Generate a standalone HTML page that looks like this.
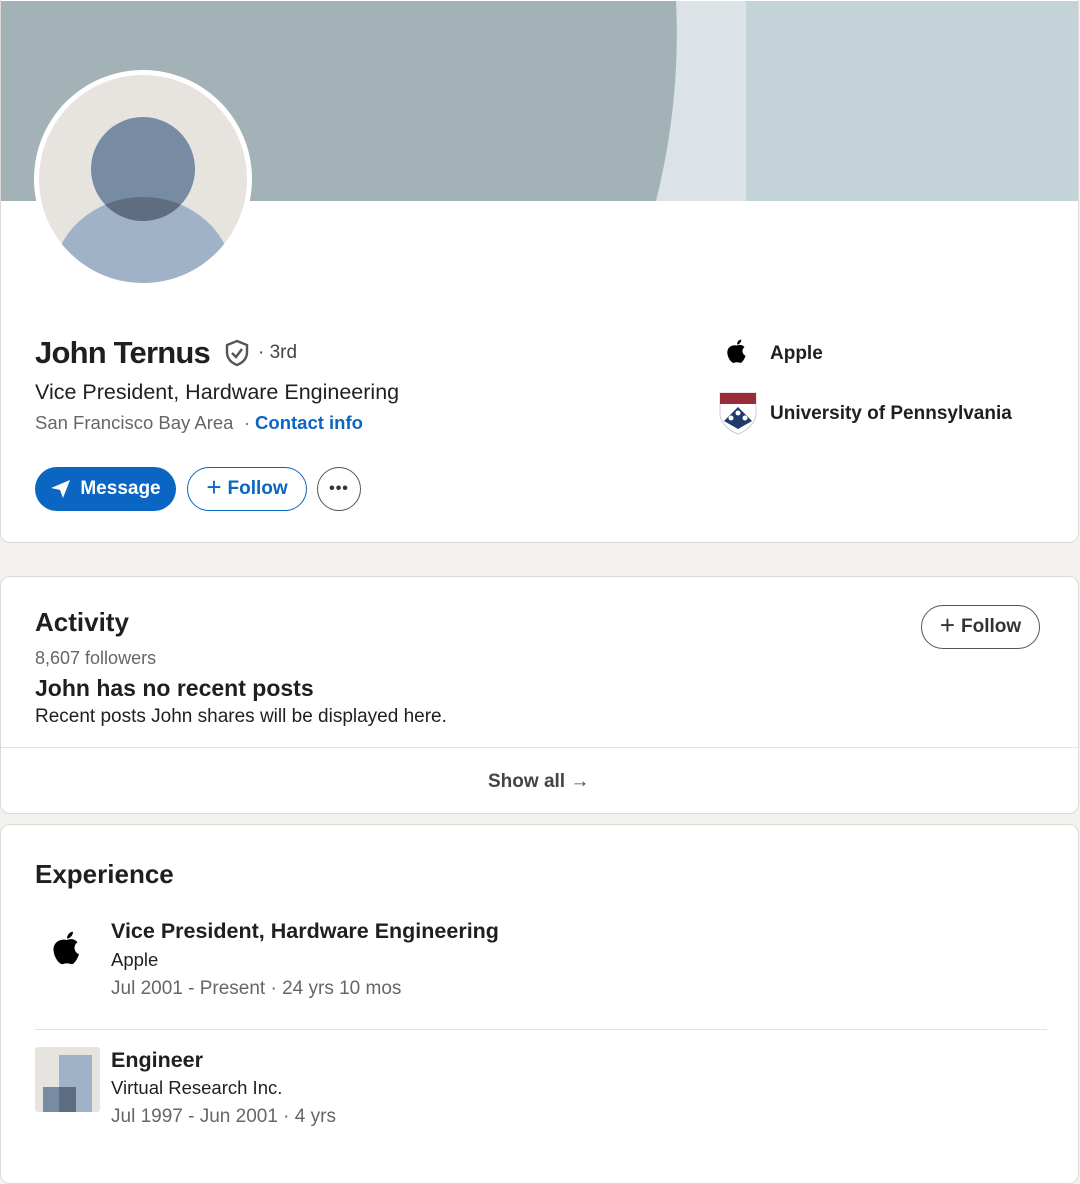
<!DOCTYPE html>
<html><head><meta charset="utf-8"><style>
*{margin:0;padding:0;box-sizing:border-box}
body{width:1080px;height:1170px;background:#f3f2ef;font-family:"Liberation Sans",Arial,sans-serif;position:relative;overflow:hidden;color:#1f1f1f}
.a{position:absolute;white-space:nowrap}
.card{position:absolute;left:0;width:1079px;background:#fff;border:1px solid #dcdad6;border-radius:10px}
.btn{position:absolute;border-radius:22px;font-weight:bold;font-size:19px;display:flex;align-items:center;justify-content:center}
</style></head><body>
<div class="card" style="top:-10px;height:553px;overflow:hidden">
 <svg class="a" style="left:0;top:10px" width="1080" height="200">
  <rect width="1080" height="200" fill="#c4d3d7"/>
  <rect width="745" height="200" fill="#dbe3e6"/>
  <path d="M0 0 H675 Q680 100 655 200 H0Z" fill="#a3b2b6"/>
 </svg>
 <svg class="a" style="left:32px;top:78px" width="220" height="220">
  <defs><clipPath id="c"><circle cx="110" cy="110" r="104"/></clipPath><clipPath id="h"><circle cx="110" cy="100" r="52"/></clipPath></defs>
  <circle cx="110" cy="110" r="109" fill="#fff"/>
  <circle cx="110" cy="110" r="104" fill="#e7e4e0"/>
  <g clip-path="url(#c)">
   <ellipse cx="110" cy="210" rx="90" ry="82" fill="#a0b2c8"/>
   <circle cx="110" cy="100" r="52" fill="#778ca3"/>
   <ellipse cx="110" cy="210" rx="90" ry="82" fill="#5e6d80" clip-path="url(#h)"/>
  </g>
 </svg>
 <div class="a" style="left:34px;top:344px;font-size:31px;font-weight:bold;letter-spacing:-0.8px">John Ternus</div>
 <svg class="a" style="left:222px;top:347px" width="28" height="30" viewBox="0 0 28 30"><path d="M14 3 L24 7 V14 C24 21 19 25 14 27 C9 25 4 21 4 14 V7Z" fill="none" stroke="#555" stroke-width="2.4"/><path d="M9 15 L13 19 L19 11" fill="none" stroke="#555" stroke-width="2.4"/></svg>
 <div class="a" style="left:257px;top:351px;font-size:19px;color:#444">· 3rd</div>
 <div class="a" style="left:34px;top:389px;font-size:21.5px">Vice President, Hardware Engineering</div>
 <div class="a" style="left:34px;top:421px;font-size:18.5px;color:#666">San Francisco Bay Area &nbsp;· <span style="color:#0a66c2;font-weight:bold">Contact info</span></div>
 <div class="btn" style="left:34px;top:476px;width:141px;height:44px;background:#0a66c2;color:#fff">
  <svg width="22" height="20" viewBox="0 0 22 20" style="margin-right:8px"><path d="M1 9 L20 1 L13 19 L10 11Z" fill="#fff"/></svg>Message</div>
 <div class="btn" style="left:186px;top:476px;width:120px;height:44px;border:1.5px solid #0a66c2;color:#0a66c2"><span style="font-size:26px;font-weight:normal;margin-right:6px;margin-top:-3px">+</span>Follow</div>
 <div class="btn" style="left:316px;top:476px;width:44px;height:44px;border:1.5px solid #555;color:#333;font-size:16px;letter-spacing:1px">•••</div>
 <svg class="a" style="left:723px;top:347px" width="26" height="28" viewBox="0 0 24 26"><path d="M12 7 C14 6 17 6 19 8.5 C16 10.5 16.5 15 20 16.5 C19 19.5 16.5 24 14.5 23 C13 22.4 11 22.4 9.5 23 C7 24 3 18 3 13.5 C3 8 8 6 12 7Z" fill="#000"/><path d="M12 6 C12 3.5 14 1.5 16 1.5 C16 4 14 6 12 6Z" fill="#000"/></svg>
 <div class="a" style="left:769px;top:352px;font-size:19px;font-weight:bold">Apple</div>
 <svg class="a" style="left:717px;top:400px" width="40" height="44" viewBox="0 0 40 44"><path d="M2 2 H38 V22 C38 33 28 40 20 43 C12 40 2 33 2 22Z" fill="#fff" stroke="#ccc"/><rect x="2" y="2" width="36" height="11" fill="#9a2c3a"/><path d="M6 30 L20 16 L34 30 L20 38Z" fill="#1f3a6e"/><circle cx="13" cy="27" r="2.5" fill="#fff"/><circle cx="20" cy="22" r="2.5" fill="#fff"/><circle cx="27" cy="27" r="2.5" fill="#fff"/></svg>
 <div class="a" style="left:769px;top:412px;font-size:19px;font-weight:bold">University of Pennsylvania</div>
</div>
<div class="card" style="top:576px;height:238px">
 <div class="a" style="left:34px;top:30px;font-size:26px;font-weight:bold">Activity</div>
 <div class="a" style="left:34px;top:71px;font-size:18px;color:#666">8,607 followers</div>
 <div class="a" style="left:34px;top:98px;font-size:23px;font-weight:bold">John has no recent posts</div>
 <div class="a" style="left:34px;top:129px;font-size:19px">Recent posts John shares will be displayed here.</div>
 <div class="btn" style="left:920px;top:28px;width:119px;height:44px;border:1.5px solid #555;color:#333"><span style="font-size:26px;font-weight:normal;margin-right:6px;margin-top:-3px">+</span>Follow</div>
 <div class="a" style="left:0;top:170px;width:1077px;border-top:1px solid #e3e3e3"></div>
 <div class="a" style="left:487px;top:194px;font-size:19px;font-weight:bold;color:#444">Show all →</div>
</div>
<div class="card" style="top:824px;height:360px">
 <div class="a" style="left:34px;top:34px;font-size:26px;font-weight:bold">Experience</div>
 <svg class="a" style="left:48px;top:104px" width="36" height="40" viewBox="0 0 24 26"><path d="M12 7 C14 6 17 6 19 8.5 C16 10.5 16.5 15 20 16.5 C19 19.5 16.5 24 14.5 23 C13 22.4 11 22.4 9.5 23 C7 24 3 18 3 13.5 C3 8 8 6 12 7Z" fill="#000"/><path d="M12 6 C12 3.5 14 1.5 16 1.5 C16 4 14 6 12 6Z" fill="#000"/></svg>
 <div class="a" style="left:110px;top:94px;font-size:21.5px;font-weight:bold">Vice President, Hardware Engineering</div>
 <div class="a" style="left:110px;top:124px;font-size:18.5px">Apple</div>
 <div class="a" style="left:110px;top:153px;font-size:19px;color:#666">Jul 2001 - Present · 24 yrs 10 mos</div>
 <div class="a" style="left:34px;top:204px;width:1012px;border-top:1px solid #e3e3e3"></div>
 <svg class="a" style="left:34px;top:222px" width="65" height="65"><rect width="65" height="65" rx="3" fill="#e7e4e0"/><rect x="24" y="8" width="33" height="57" fill="#a0b2c8"/><rect x="8" y="40" width="33" height="25" fill="#778ca3"/><rect x="24" y="40" width="17" height="25" fill="#5e6d80"/></svg>
 <div class="a" style="left:110px;top:223px;font-size:21.5px;font-weight:bold">Engineer</div>
 <div class="a" style="left:110px;top:252px;font-size:18.5px">Virtual Research Inc.</div>
 <div class="a" style="left:110px;top:281px;font-size:19px;color:#666">Jul 1997 - Jun 2001 · 4 yrs</div>
</div>
</body></html>
